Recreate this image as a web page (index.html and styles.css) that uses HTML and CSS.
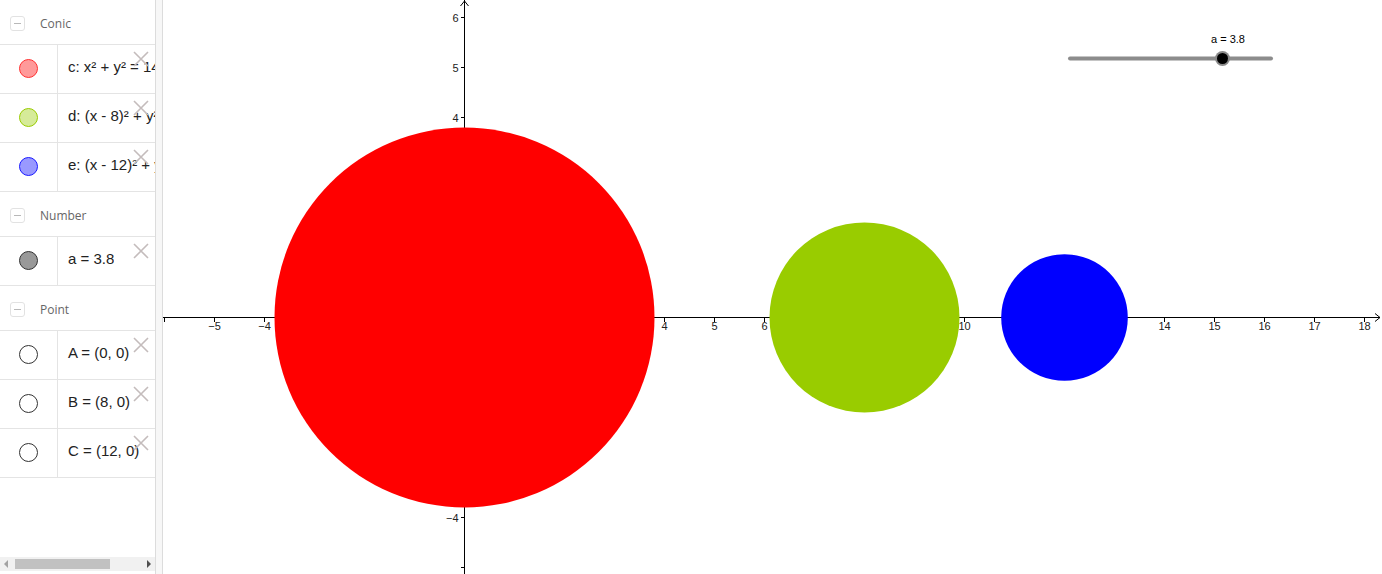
FILE: index.html
```html
<!DOCTYPE html>
<html>
<head>
<meta charset="utf-8">
<link rel="stylesheet" href="styles.css">
</head>
<body>
<div class="app">
  <aside class="algebra">
    <div class="group-head"><span class="collapse"><span class="dash"></span></span><span class="group-title">Conic</span></div>
    <div class="row"><div class="icon-cell"><span class="dot dot-red"></span></div><div class="text-cell">c: x² + y² = 14.44</div><svg class="del" viewBox="0 0 16 16"><path d="M1 1L15 15M15 1L1 15"/></svg></div>
    <div class="row"><div class="icon-cell"><span class="dot dot-green"></span></div><div class="text-cell">d: (x - 8)² + y² = 3.61</div><svg class="del" viewBox="0 0 16 16"><path d="M1 1L15 15M15 1L1 15"/></svg></div>
    <div class="row"><div class="icon-cell"><span class="dot dot-blue"></span></div><div class="text-cell">e: (x - 12)² + y² = 1.6</div><svg class="del" viewBox="0 0 16 16"><path d="M1 1L15 15M15 1L1 15"/></svg></div>
    <div class="group-head"><span class="collapse"><span class="dash"></span></span><span class="group-title">Number</span></div>
    <div class="row"><div class="icon-cell"><span class="dot dot-gray"></span></div><div class="text-cell">a = 3.8</div><svg class="del" viewBox="0 0 16 16"><path d="M1 1L15 15M15 1L1 15"/></svg></div>
    <div class="group-head"><span class="collapse"><span class="dash"></span></span><span class="group-title">Point</span></div>
    <div class="row"><div class="icon-cell"><span class="dot dot-white"></span></div><div class="text-cell">A = (0, 0)</div><svg class="del" viewBox="0 0 16 16"><path d="M1 1L15 15M15 1L1 15"/></svg></div>
    <div class="row"><div class="icon-cell"><span class="dot dot-white"></span></div><div class="text-cell">B = (8, 0)</div><svg class="del" viewBox="0 0 16 16"><path d="M1 1L15 15M15 1L1 15"/></svg></div>
    <div class="row"><div class="icon-cell"><span class="dot dot-white"></span></div><div class="text-cell">C = (12, 0)</div><svg class="del" viewBox="0 0 16 16"><path d="M1 1L15 15M15 1L1 15"/></svg></div>
    <div class="spacer"></div>
    <div class="hscroll">
      <span class="arrow arrow-left"></span>
      <span class="thumb"></span>
      <span class="arrow arrow-right"></span>
    </div>
  </aside>
  <div class="splitter"></div>
  <main class="graphics">
    <svg class="canvas" viewBox="163 0 1219 574" width="1219" height="574">
      <g class="axis">
        <line x1="163" y1="317.5" x2="1380" y2="317.5"/>
        <line x1="464.5" y1="0" x2="464.5" y2="574"/>
        <polyline class="arrowhead" points="1375,313.5 1380,317.5 1375,321.5"/>
        <polyline class="arrowhead" points="460.5,6 464.5,1 468.5,6"/>
      </g>
      <g class="ticks" id="ticks"></g>
      <g class="labels" id="labels"></g>
      <circle cx="464.5" cy="317.5" r="190" fill="#ff0000"/>
      <circle cx="864.5" cy="317.5" r="95" fill="#99cc00"/>
      <circle cx="1064.5" cy="317.5" r="63.3" fill="#0000ff"/>
      <g class="slider">
        <line x1="1070" y1="58.5" x2="1271" y2="58.5"/>
        <circle cx="1222.5" cy="58.5" r="7.5" fill="#8a8a8a"/>
        <circle cx="1222.5" cy="58.5" r="5.5" fill="#000"/>
        <text x="1211" y="43" class="slider-label">a = 3.8</text>
      </g>
    </svg>
  </main>
</div>
<script src="app.js"></script>
</body>
</html>
```
FILE: app.js
```js
(function () {
  var ns = "http://www.w3.org/2000/svg";
  var ticks = document.getElementById("ticks");
  var labels = document.getElementById("labels");
  var ox = 464.5, oy = 317.5, s = 50;
  function line(x1, y1, x2, y2) {
    var l = document.createElementNS(ns, "line");
    l.setAttribute("x1", x1); l.setAttribute("y1", y1);
    l.setAttribute("x2", x2); l.setAttribute("y2", y2);
    ticks.appendChild(l);
  }
  function text(x, y, str, anchor) {
    var t = document.createElementNS(ns, "text");
    t.setAttribute("x", x); t.setAttribute("y", y);
    t.setAttribute("text-anchor", anchor);
    t.textContent = str;
    labels.appendChild(t);
  }
  function fmt(n) { return n < 0 ? "\u2212" + (-n) : String(n); }
  for (var i = -6; i <= 18; i++) {
    if (i === 0) continue;
    var x = ox + i * s;
    line(x, oy, x, oy + 4);
    if (i >= -5) text(x, oy + 12.5, fmt(i), "middle");
  }
  for (var j = -5; j <= 6; j++) {
    if (j === 0) continue;
    var y = oy - j * s;
    line(ox - 4, y, ox, y);
    if (j >= -4) text(ox - 6, y + 4, fmt(j), "end");
  }
})();
```
FILE: styles.css
```css
html, body {
  margin: 0;
  padding: 0;
  background: #fff;
}
body {
  width: 1382px;
  height: 574px;
  overflow: hidden;
  font-family: "Liberation Sans", Arial, sans-serif;
}
.app {
  display: flex;
  height: 574px;
}
.algebra {
  width: 155px;
  flex: none;
  border-right: 1px solid #dcdcdc;
  display: flex;
  flex-direction: column;
  overflow: hidden;
  position: relative;
}
.group-head {
  height: 44px;
  flex: none;
  border-bottom: 1px solid #e4e4e4;
  display: flex;
  align-items: center;
  padding-left: 10px;
  box-sizing: content-box;
}
.collapse {
  width: 13px;
  height: 13px;
  border: 1px solid #e2e2e2;
  border-radius: 3px;
  display: flex;
  align-items: center;
  justify-content: center;
  margin-top: 2px;
}
.dash {
  width: 7px;
  height: 1px;
  background: #b8b8b8;
}
.group-title {
  margin-left: 15px;
  font-family: "Open Sans", "Noto Sans", sans-serif;
  font-size: 12px;
  color: #666;
  padding-top: 2px;
}
.row {
  height: 48px;
  flex: none;
  border-bottom: 1px solid #e4e4e4;
  display: flex;
  position: relative;
}
.icon-cell {
  width: 58px;
  flex: none;
  border-right: 1px solid #e4e4e4;
  display: flex;
  align-items: center;
  justify-content: center;
  padding-bottom: 2px;
  box-sizing: border-box;
}
.dot {
  width: 17px;
  height: 17px;
  border-radius: 50%;
  border: 1px solid #333;
  box-sizing: content-box;
}
.dot-red { background: #ff9a9a; border-color: #ff3030; }
.dot-green { background: #d6eb99; border-color: #99cc00; }
.dot-blue { background: #9999ff; border-color: #1a1aff; }
.dot-gray { background: #999; border-color: #333; }
.dot-white { background: #fff; border-color: #333; }
.text-cell {
  padding-left: 10px;
  display: flex;
  align-items: center;
  white-space: nowrap;
  font-size: 15px;
  color: #222;
  padding-bottom: 5px;
  overflow: hidden;
}
.del {
  position: absolute;
  right: 6px;
  top: 6px;
  width: 16px;
  height: 16px;
}
.del path {
  stroke: #c4bcbc;
  stroke-width: 1.6;
  fill: none;
}
.spacer {
  flex: 1;
}
.hscroll {
  height: 14px;
  margin-bottom: 3px;
  background: #f1f1f1;
  display: flex;
  align-items: center;
  position: relative;
}
.thumb {
  position: absolute;
  left: 15px;
  width: 95px;
  top: 2px;
  height: 10px;
  background: #c1c1c1;
}
.arrow {
  position: absolute;
  top: 3px;
  width: 0;
  height: 0;
  border-top: 4px solid transparent;
  border-bottom: 4px solid transparent;
}
.arrow-left {
  left: 4px;
  border-right: 4px solid #a3a3a3;
}
.arrow-right {
  right: 4px;
  border-left: 4px solid #505050;
}
.splitter {
  width: 6px;
  flex: none;
  background: #f7f7f7;
  border-right: 1px solid #dcdcdc;
}
.graphics {
  flex: 1;
  overflow: hidden;
}
.canvas {
  display: block;
}
.axis line, .ticks line {
  stroke: #000;
  stroke-width: 1;
  shape-rendering: crispEdges;
}
.arrowhead {
  stroke: #000;
  stroke-width: 1;
  fill: none;
}
.labels text {
  font-family: "Liberation Sans", Arial, sans-serif;
  font-size: 11px;
  fill: #222;
}
.slider line {
  stroke: #8c8c8c;
  stroke-width: 4;
  stroke-linecap: round;
}
.slider-label {
  font-family: "Liberation Sans", Arial, sans-serif;
  font-size: 11px;
  fill: #000;
}
```
